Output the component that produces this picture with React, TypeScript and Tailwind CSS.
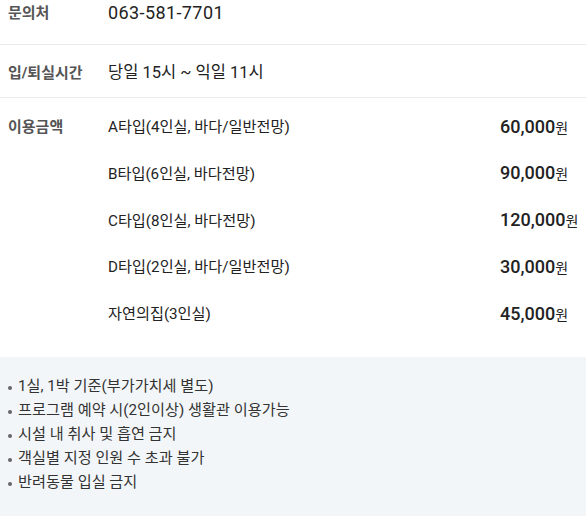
import React from "react";

const font = { fontFamily: 'Roboto, "Noto Sans CJK KR", sans-serif' };

const items = [
  { name: "A타입(4인실, 바다/일반전망)", price: "60,000" },
  { name: "B타입(6인실, 바다전망)", price: "90,000" },
  { name: "C타입(8인실, 바다전망)", price: "120,000" },
  { name: "D타입(2인실, 바다/일반전망)", price: "30,000" },
  { name: "자연의집(3인실)", price: "45,000" },
];

const notes = [
  "1실, 1박 기준(부가가치세 별도)",
  "프로그램 예약 시(2인이상) 생활관 이용가능",
  "시설 내 취사 및 흡연 금지",
  "객실별 지정 인원 수 초과 불가",
  "반려동물 입실 금지",
];

export default function App() {
  return (
    <div className="w-[586px] h-[516px] overflow-hidden bg-white" style={font}>
      <div className="flex border-b border-[#ebebeb] pt-[3px] pb-[21px]">
        <div className="w-[108px] pl-[8px] text-[15px] leading-[20px] font-bold text-[#555]">문의처</div>
        <div className="text-[18px] leading-[20px] text-[#222] tracking-[0.4px]">063-581-7701</div>
      </div>
      <div className="flex border-b border-[#ebebeb] pt-[18px] pb-[14px]">
        <div className="w-[108px] pl-[8px] text-[15px] leading-[20px] font-bold text-[#555]">입/퇴실시간</div>
        <div className="text-[16.5px] leading-[20px] text-[#222]">당일 15시 ~ 익일 11시</div>
      </div>
      <div className="flex pt-[17px] pb-[31px]">
        <div className="w-[108px] pl-[8px] text-[15px] leading-[24px] font-bold text-[#555]">이용금액</div>
        <div className="flex-1 flex flex-col gap-[22.75px]">
          {items.map((it) => (
            <div key={it.name} className="flex items-center h-[24px]">
              <div className="flex-1 text-[15.2px] leading-[24px] text-[#222]">{it.name}</div>
              <div className="w-[86px] leading-[24px] text-[#222]">
                <span className="text-[18px] font-medium">{it.price}</span>
                <span className="text-[14px]">원</span>
              </div>
            </div>
          ))}
        </div>
      </div>
      <div className="bg-[#f3f6f9] pt-[17px] pb-[30px] pl-[8px]">
        {notes.map((n) => (
          <div key={n} className="flex items-center h-[24px] text-[15.2px] text-[#333]">
            <span className="w-[4px] h-[4px] rounded-full bg-[#666] mr-[6px] mt-[4px]" />
            <span>{n}</span>
          </div>
        ))}
      </div>
    </div>
  );
}
